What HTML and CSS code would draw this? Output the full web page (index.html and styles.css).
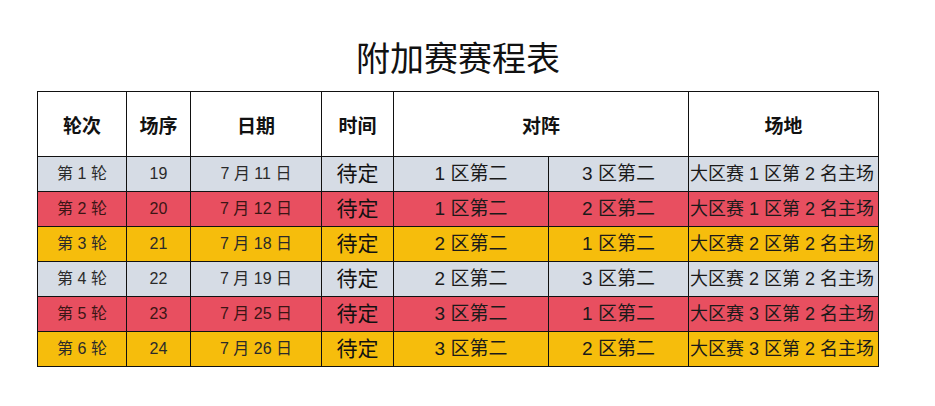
FILE: index.html
```html
<!DOCTYPE html>
<html lang="zh">
<head>
<meta charset="utf-8">
<link rel="stylesheet" href="styles.css">
</head>
<body>
<div class="page">
  <h1 class="title">附加赛赛程表</h1>
  <table class="schedule">
    <colgroup>
      <col class="c-round"><col class="c-seq"><col class="c-date"><col class="c-time"><col class="c-a"><col class="c-b"><col class="c-venue">
    </colgroup>
    <thead>
      <tr class="head">
        <th>轮次</th><th>场序</th><th>日期</th><th>时间</th><th colspan="2">对阵</th><th>场地</th>
      </tr>
    </thead>
    <tbody>
      <tr class="row grey"><td class="sm">第 1 轮</td><td class="sm">19</td><td class="sm">7 月 11 日</td><td class="lg">待定</td><td class="md">1 区第二</td><td class="md">3 区第二</td><td class="venue">大区赛 1 区第 2 名主场</td></tr>
      <tr class="row red"><td class="sm">第 2 轮</td><td class="sm">20</td><td class="sm">7 月 12 日</td><td class="lg">待定</td><td class="md">1 区第二</td><td class="md">2 区第二</td><td class="venue">大区赛 1 区第 2 名主场</td></tr>
      <tr class="row gold"><td class="sm">第 3 轮</td><td class="sm">21</td><td class="sm">7 月 18 日</td><td class="lg">待定</td><td class="md">2 区第二</td><td class="md">1 区第二</td><td class="venue">大区赛 2 区第 2 名主场</td></tr>
      <tr class="row grey"><td class="sm">第 4 轮</td><td class="sm">22</td><td class="sm">7 月 19 日</td><td class="lg">待定</td><td class="md">2 区第二</td><td class="md">3 区第二</td><td class="venue">大区赛 2 区第 2 名主场</td></tr>
      <tr class="row red"><td class="sm">第 5 轮</td><td class="sm">23</td><td class="sm">7 月 25 日</td><td class="lg">待定</td><td class="md">3 区第二</td><td class="md">1 区第二</td><td class="venue">大区赛 3 区第 2 名主场</td></tr>
      <tr class="row gold"><td class="sm">第 6 轮</td><td class="sm">24</td><td class="sm">7 月 26 日</td><td class="lg">待定</td><td class="md">3 区第二</td><td class="md">2 区第二</td><td class="venue">大区赛 3 区第 2 名主场</td></tr>
    </tbody>
  </table>
</div>
</body>
</html>
```

FILE: styles.css
```css
html, body {
  margin: 0;
  padding: 0;
  background: #ffffff;
}
body {
  font-family: "Liberation Sans", "Noto Sans CJK SC", sans-serif;
  color: #1a1a1a;
}
.page {
  width: 842px;
  padding: 37px 0 0 37px;
}
.title {
  margin: 0 0 14px 0;
  height: 40px;
  line-height: 40px;
  font-family: "Noto Sans CJK SC", sans-serif;
  font-size: 34px;
  font-weight: 400;
  text-align: center;
  color: #111;
}
.schedule {
  width: 841px;
  border-collapse: collapse;
  table-layout: fixed;
}
.c-round { width: 89px; }
.c-seq { width: 64px; }
.c-date { width: 131px; }
.c-time { width: 72px; }
.c-a { width: 155px; }
.c-b { width: 140px; }
.c-venue { width: 190px; }
.schedule th, .schedule td {
  border: 1px solid #111;
  padding: 0;
  text-align: center;
  vertical-align: middle;
  white-space: nowrap;
  overflow: hidden;
}
.head th {
  height: 64px;
  font-family: "Noto Sans CJK SC", sans-serif;
  font-size: 19px;
  font-weight: 700;
  color: #111;
}
.row td {
  height: 34px;
  line-height: 34px;
}
.grey td { background: #d6dce5; }
.red td { background: #e84f60; }
.gold td { background: #f6bd0c; }
.sm { font-size: 16px; color: #2a2a2a; }
.red .sm { color: #3b1515; }
.lg { font-size: 21px; color: #111; }
.md { font-size: 19px; color: #1a1a1a; }
.venue {
  font-size: 18px;
  text-align: left !important;
  padding-left: 1px !important;
  color: #1a1a1a;
}
```
